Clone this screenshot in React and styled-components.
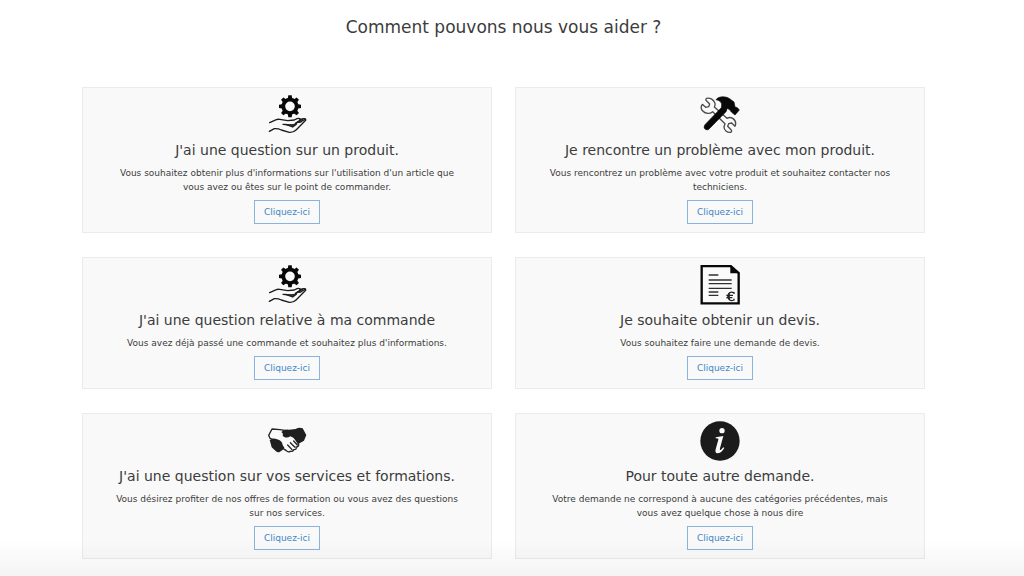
import React from "react";
import styled, { createGlobalStyle } from "styled-components";

const GlobalStyle = createGlobalStyle`
  *, *::before, *::after { box-sizing: border-box; }
  body {
    margin: 0;
    background: #fff;
    color: #3c3c3c;
    font-family: Verdana, "DejaVu Sans", sans-serif;
  }
`;

const Page = styled.main`
  min-height: 100vh;
  padding: 15px 99px 18px 82px;
`;

const Heading = styled.h1`
  margin: 0 0 48px;
  font-size: 17px;
  line-height: 24px;
  font-weight: 400;
  text-align: center;
`;

const Grid = styled.div`
  display: grid;
  grid-template-columns: 1fr 1fr;
  gap: 24px 23px;
`;

const Card = styled.section`
  display: flex;
  flex-direction: column;
  align-items: center;
  padding: 7px 28px 8px;
  border: 1px solid #ebebeb;
  background: #f9f9f9;
  text-align: center;
`;

const Icon = styled.svg`
  display: block;
  width: 40px;
  height: 40px;
  margin-bottom: 5px;
`;

const CardTitle = styled.h2`
  margin: 0 0 6px;
  font-size: 14px;
  line-height: 20px;
  font-weight: 400;
`;

const Description = styled.p`
  margin: 0 0 6px;
  font-size: 9px;
  line-height: 14px;
`;

const CardLink = styled.a`
  padding: 0 9px;
  border: 1px solid #8ab4dc;
  color: #4187c7;
  font-size: 9px;
  line-height: 22px;
  text-decoration: none;
`;

const BottomShade = styled.div`
  position: fixed;
  right: 0;
  bottom: 0;
  left: 0;
  height: 36px;
  background: linear-gradient(rgba(0, 0, 0, 0), rgba(0, 0, 0, 0.045));
  pointer-events: none;
`;

const teeth = [0, 45, 90, 135, 180, 225, 270, 315];

const GearHandIcon = () => (
  <Icon viewBox="21 21 120 120" aria-hidden="true">
    <circle cx="90" cy="55" r="20" fill="none" stroke="#080808" strokeWidth="11" />
    {teeth.map((angle) => (
      <path key={angle} d="M83 34L85 22H95L97 34Z" fill="#080808" transform={`rotate(${angle} 90 55)`} />
    ))}
    <g fill="none" stroke="#1c1c1c" strokeWidth="4" strokeLinecap="round" strokeLinejoin="round">
      <path d="M29 104L49 95Q53 93 59 94L83 98L103 96L111 92Q117 90 121 93L119 98L106 106" />
      <path d="M120 95L130 92Q138 91 137 97L109 125Q100 134 88 133L64 126Q54 121 43 122L28 130" />
      <path d="M69 109L94 111Q107 110 113 103L127 94" />
      <path d="M77 109L98 117L109 109" fill="#333" />
      <path d="M114 101Q121 105 126 99L135 94" />
    </g>
  </Icon>
);

const ToolsIcon = () => (
  <Icon viewBox="31 21 120 120" aria-hidden="true">
    <path
      d="M51 31C61 28 73 35 76 46Q77 51 74 57L112 91Q120 86 129 91C137 96 140 105 136 115L126 105L117 107L114 115L124 125Q128 130 123 133C112 134 103 127 103 116L106 107L69 71C61 78 48 78 40 70C34 64 33 56 38 49L48 58L57 56L60 48L51 39Q46 35 51 31Z"
      fill="#fafafa" stroke="#4b4b4b" strokeWidth="4" strokeLinejoin="round"
    />
    <path
      d="M79 35C85 25 108 23 121 33L133 42L136 57L143 59L149 66L136 81L125 72L121 66L113 61L109 71L59 122Q54 128 47 124Q40 118 46 110L95 59Q99 46 91 40Q86 36 79 35Z"
      fill="#080808" stroke="#080808" strokeWidth="2" strokeLinejoin="round"
    />
  </Icon>
);

const QuoteIcon = () => (
  <Icon viewBox="31 21 120 120" aria-hidden="true">
    <path d="M36 24H123L147 45V136H36Z" fill="#fafafa" stroke="#080808" strokeWidth="7" />
    <path d="M122 22L150 46H122Z" fill="#080808" />
    <path
      d="M57 51H86M57 66H126M57 77H126M57 91H126M57 102H86M57 112H86"
      fill="none" stroke="#303030" strokeWidth="4"
    />
    <path
      d="M133 108V104C122 99 115 106 115 115C115 125 123 131 133 126V122M110 112H130M110 119H128"
      fill="none" stroke="#252525" strokeWidth="4"
    />
    <path d="M120 103C111 108 112 124 121 127Z" fill="#252525" />
  </Icon>
);

const HandshakeIcon = () => (
  <Icon viewBox="21 18 120 120" aria-hidden="true">
    <path
      d="M36 42L60 44L79 47L102 64L116 88Q117 95 108 96Q111 105 101 104Q99 110 91 109Q84 113 79 107L65 98L48 77L30 70L26 61Z"
      fill="#fafafa" stroke="#242424" strokeWidth="4" strokeLinejoin="round"
    />
    <path d="M29 75Q40 67 51 73Q66 76 68 90L73 98Q68 106 60 110Q54 115 47 108L35 97Z" fill="#202020" />
    <path
      d="M64 51Q72 42 87 44L107 42Q117 36 128 40L139 60L132 77L116 86L100 68L91 64Q82 70 73 66Q66 63 69 56Z"
      fill="#202020"
    />
    <path
      d="M91 83L104 96M83 90L96 104M101 78L112 90"
      fill="none" stroke="#242424" strokeWidth="4" strokeLinecap="round"
    />
  </Icon>
);

const InfoIcon = () => (
  <Icon viewBox="31 18 120 120" aria-hidden="true">
    <circle cx="91" cy="78" r="59" fill="#1b1b1b" />
    <circle cx="97" cy="47" r="8" fill="#fafafa" />
    <path
      d="M78 67L101 63L91 100Q89 107 94 104L101 97L104 99C98 109 91 115 83 115Q75 114 78 103L86 74Q87 70 78 70Z"
      fill="#fafafa"
    />
  </Icon>
);

const topics = [
  {
    icon: GearHandIcon,
    title: "J'ai une question sur un produit.",
    text: "Vous souhaitez obtenir plus d'informations sur l'utilisation d'un article que vous avez ou êtes sur le point de commander.",
  },
  {
    icon: ToolsIcon,
    title: "Je rencontre un problème avec mon produit.",
    text: "Vous rencontrez un problème avec votre produit et souhaitez contacter nos techniciens.",
  },
  {
    icon: GearHandIcon,
    title: "J'ai une question relative à ma commande",
    text: "Vous avez déjà passé une commande et souhaitez plus d'informations.",
  },
  {
    icon: QuoteIcon,
    title: "Je souhaite obtenir un devis.",
    text: "Vous souhaitez faire une demande de devis.",
  },
  {
    icon: HandshakeIcon,
    title: "J'ai une question sur vos services et formations.",
    text: "Vous désirez profiter de nos offres de formation ou vous avez des questions sur nos services.",
  },
  {
    icon: InfoIcon,
    title: "Pour toute autre demande.",
    text: "Votre demande ne correspond à aucune des catégories précédentes, mais vous avez quelque chose à nous dire",
  },
];

export default function App() {
  return (
    <>
      <GlobalStyle />
      <Page>
        <Heading>Comment pouvons nous vous aider ?</Heading>
        <Grid>
          {topics.map(({ icon: TopicIcon, title, text }) => (
            <Card key={title}>
              <TopicIcon />
              <CardTitle>{title}</CardTitle>
              <Description>{text}</Description>
              <CardLink href="#contact">Cliquez-ici</CardLink>
            </Card>
          ))}
        </Grid>
      </Page>
      <BottomShade />
    </>
  );
}
